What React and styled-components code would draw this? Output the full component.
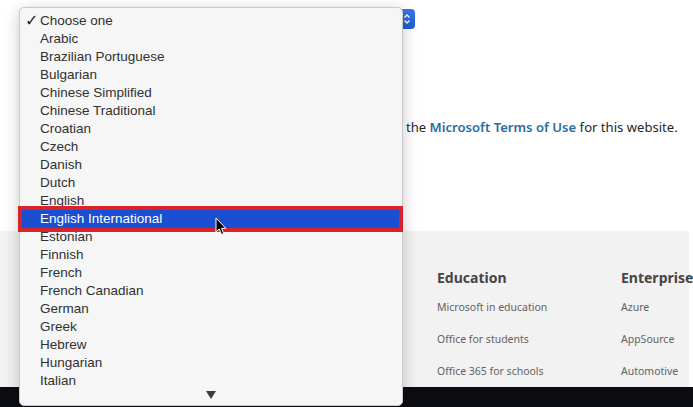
import styled, { createGlobalStyle } from "styled-components"

const GlobalStyle = createGlobalStyle`
  html, body {
    margin: 0;
    padding: 0;
    background: #ffffff;
  }
  #root {
    width: 693px;
    height: 407px;
    overflow: hidden;
  }
`

const languages = [
  "Arabic",
  "Brazilian Portuguese",
  "Bulgarian",
  "Chinese Simplified",
  "Chinese Traditional",
  "Croatian",
  "Czech",
  "Danish",
  "Dutch",
  "English",
  "English International",
  "Estonian",
  "Finnish",
  "French",
  "French Canadian",
  "German",
  "Greek",
  "Hebrew",
  "Hungarian",
  "Italian",
]

const footerColumns = [
  { title: "Education", links: ["Microsoft in education", "Office for students", "Office 365 for schools"] },
  { title: "Enterprise", links: ["Azure", "AppSource", "Automotive"] },
]

const Page = styled.main`
  position: relative;
  display: flex;
  flex-direction: column;
  width: 693px;
  height: 407px;
  font-family: "Noto Sans", "Open Sans", sans-serif;
`

const TopSection = styled.section`
  display: flex;
  flex-direction: column;
  height: 231px;
  background: #ffffff;
`

const SelectBox = styled.div`
  display: flex;
  justify-content: flex-end;
  width: 396px;
  height: 20px;
  margin: 9px 0 0 19px;
  border-radius: 4px;
  background: #ffffff;
`

const Stepper = styled.div`
  display: flex;
  align-items: center;
  justify-content: center;
  width: 16px;
  height: 20px;
  border-radius: 4px;
  background: linear-gradient(#3b78e7, #1f5bd6);
`

const Terms = styled.p`
  margin: 89px 0 0 406px;
  font-size: 13.1px;
  line-height: 18px;
  color: #262626;
  white-space: nowrap;

  a {
    color: #2a6d9e;
    font-weight: 600;
    text-decoration: none;
  }
`

const Footer = styled.footer`
  display: flex;
  width: 689px;
  height: 156px;
  box-sizing: border-box;
  padding: 37px 0 0 437px;
  background: #f2f2f2;
`

const FooterColumn = styled.div`
  display: flex;
  flex-direction: column;
  flex: 0 0 184px;
`

const FooterTitle = styled.h3`
  margin: 0 0 3px;
  font-size: 14px;
  line-height: 20px;
  font-weight: 700;
  color: #454545;
  white-space: nowrap;
`

const FooterLink = styled.a`
  font-size: 10.5px;
  line-height: 32px;
  color: #626262;
  white-space: nowrap;
`

const DarkBar = styled.div`
  flex: 1;
  background: #0c0c13;
`

const Menu = styled.ul`
  position: absolute;
  left: 19px;
  top: 7px;
  width: 384px;
  height: 399px;
  box-sizing: border-box;
  margin: 0;
  padding: 4px 0 0;
  list-style: none;
  background: #f6f6f6;
  border: 1px solid #c9c9c9;
  border-radius: 5px;
  box-shadow: 0 4px 16px rgba(0, 0, 0, 0.22);
  font-family: "Liberation Sans", Arial, sans-serif;
  font-size: 13.5px;
`

const MenuItem = styled.li`
  position: relative;
  height: 18px;
  line-height: 18px;
  padding-left: 18px;
  margin: 0 2px;
  color: ${(p) => (p.$active ? "#ffffff" : "#303030")};
  background: ${(p) => (p.$active ? "#1a4fd2" : "transparent")};

  ${(p) =>
    p.$active &&
    `
    &::after {
      content: "";
      position: absolute;
      inset: -4px -3px -4px -4px;
      border: 4px solid #d8222c;
    }
  `}
`

const Check = styled.span`
  position: absolute;
  left: 3px;
  top: 0;
  font-family: "DejaVu Sans", sans-serif;
  font-size: 16px;
  font-weight: 700;
  color: #222;
`

const ScrollArrow = styled.div`
  position: absolute;
  left: 186px;
  bottom: 6px;
  width: 0;
  height: 0;
  border-left: 5px solid transparent;
  border-right: 5px solid transparent;
  border-top: 8px solid #3c3c3c;
`

const Cursor = styled.svg`
  position: absolute;
  left: 215px;
  top: 217px;
`

const App = () => {
  return (
    <>
      <GlobalStyle />
      <Page>
        <TopSection>
          <SelectBox>
            <Stepper>
              <svg width="8" height="12" viewBox="0 0 8 12">
                <path d="M1.5 4.5 L4 2 L6.5 4.5 M1.5 7.5 L4 10 L6.5 7.5" stroke="#fff" strokeWidth="1.4" fill="none" />
              </svg>
            </Stepper>
          </SelectBox>
          <Terms>
            the <a href="#">Microsoft Terms of Use</a> for this website.
          </Terms>
        </TopSection>
        <Footer>
          {footerColumns.map((col) => (
            <FooterColumn key={col.title}>
              <FooterTitle>{col.title}</FooterTitle>
              {col.links.map((l) => (
                <FooterLink key={l}>{l}</FooterLink>
              ))}
            </FooterColumn>
          ))}
        </Footer>
        <DarkBar />

        <Menu>
          <MenuItem>
            <Check>✓</Check>Choose one
          </MenuItem>
          {languages.map((lang) => (
            <MenuItem key={lang} $active={lang === "English International"}>
              {lang}
            </MenuItem>
          ))}
          <ScrollArrow />
        </Menu>

        <Cursor width="12" height="19" viewBox="0 0 12 19">
          <path d="M1 1 L1 15 L4.2 12 L6.6 17.5 L8.8 16.6 L6.5 11.3 L10.8 11.3 Z" fill="#000" stroke="#fff" strokeWidth="1" />
        </Cursor>
      </Page>
    </>
  )
}

export default App
